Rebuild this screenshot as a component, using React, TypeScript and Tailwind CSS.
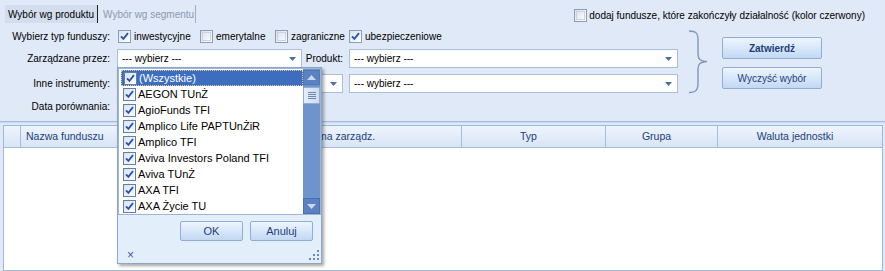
import clsx from "clsx"

const funds = [
  "(Wszystkie)",
  "AEGON TUnŻ",
  "AgioFunds TFI",
  "Amplico Life PAPTUnŻiR",
  "Amplico TFI",
  "Aviva Investors Poland TFI",
  "Aviva TUnŻ",
  "AXA TFI",
  "AXA Życie TU",
]

function Check({ on, list }: { on?: boolean; list?: boolean }) {
  return (
    <span
      className={clsx(
        "flex size-[13px] shrink-0 items-center justify-center border bg-gradient-to-br from-[#d9e1ec] to-white",
        list ? "border-[#5f7fae]" : "border-[#8b9cb5]",
      )}
    >
      {on ? (
        <svg width="9" height="9" viewBox="0 0 9 9">
          <path d="M1 4.3 L3.4 6.8 L8 1.2" stroke="#2b56a8" strokeWidth="1.9" fill="none" />
        </svg>
      ) : (
        <span className="size-[9px] border border-[#c9d3e0]" />
      )}
    </span>
  )
}

function Arrow() {
  return (
    <svg width="7" height="4" viewBox="0 0 7 4" className="ml-auto shrink-0">
      <path d="M0 0 H7 L3.5 4 Z" fill="#4d6ea8" />
    </svg>
  )
}

// the combo under the popup keeps only its arrow visible
function Combo({ w, hidden }: { w: string; hidden?: boolean }) {
  return (
    <div className={clsx("flex h-[19px] shrink-0 items-center border border-[#a9bed8] bg-white pl-[4px] pr-[5px]", w)}>
      {hidden ? null : <span>--- wybierz ---</span>}
      <Arrow />
    </div>
  )
}

function Label({ children, w = "w-[110px]" }: { children: string; w?: string }) {
  return <span className={clsx("shrink-0 whitespace-nowrap text-right", w)}>{children}</span>
}

function Btn({ children, bold, w }: { children: string; bold?: boolean; w: string }) {
  return (
    <button
      type="button"
      className={clsx(
        "flex items-center justify-center rounded-[2px] border border-[#8eaed8] bg-gradient-to-b from-[#eef5fd] via-[#d7e7f9] to-[#c2d8f3] text-[#1f3f78]",
        bold && "font-bold",
        w,
      )}
    >
      {children}
    </button>
  )
}

function Popup() {
  return (
    <div className="absolute left-[117px] top-[67px] flex h-[197px] w-[205px] flex-col border border-[#8da5c9] bg-[#e3eefb] text-[11px] shadow-[2px_2px_3px_rgba(0,0,0,0.35)]">
      <div className="flex h-[147px] border border-[#9fb5d4] bg-white">
        <div className="flex-1 pt-[1px]">
          {funds.map((f, i) => (
            <div
              key={f}
              className={clsx(
                "ml-[2px] flex h-[16px] items-center gap-[2px] whitespace-nowrap pl-[2px]",
                i === 0 ? "border border-dotted border-[#e9c982] bg-[#3d6dc0] text-white" : "text-black",
              )}
            >
              <Check on list />
              <span>{f}</span>
            </div>
          ))}
        </div>
        <div className="flex w-[17px] flex-col bg-[#6f93cb] pt-[1px]">
          <div className="flex h-[15px] items-center justify-center border border-[#5277b5] bg-[#5b83c4]">
            <svg width="9" height="5" viewBox="0 0 9 5">
              <path d="M0 5 L4.5 0 L9 5 Z" fill="#c9d8ee" />
            </svg>
          </div>
          <div className="mt-[2px] flex h-[17px] flex-col items-center justify-center gap-[1px] rounded-[1px] border border-[#93acd2] bg-gradient-to-r from-[#e4edf9] to-[#cddcf2]">
            <span className="h-px w-[8px] bg-[#6d87b0]" />
            <span className="h-px w-[8px] bg-[#6d87b0]" />
            <span className="h-px w-[8px] bg-[#6d87b0]" />
            <span className="h-px w-[8px] bg-[#6d87b0]" />
          </div>
          <div className="flex-1" />
          <div className="flex h-[16px] items-center justify-center border border-[#4a70b0] bg-[#5a82c3]">
            <svg width="9" height="5" viewBox="0 0 9 5">
              <path d="M0 0 L4.5 5 L9 0 Z" fill="#c9d8ee" />
            </svg>
          </div>
        </div>
      </div>
      <div className="mt-[6px] flex justify-end gap-[7px] pr-[8px]">
        <Btn w="h-[20px] w-[63px]">OK</Btn>
        <Btn w="h-[20px] w-[63px]">Anuluj</Btn>
      </div>
      <div className="flex flex-1 items-center justify-between pl-[9px] pr-[2px] pt-[6px]">
        <span className="text-[12px] leading-none text-[#3d5f99]">×</span>
        <svg width="10" height="10" viewBox="0 0 10 10">
          <g fill="#6f8bb5">
            <rect x="8" y="0" width="2" height="2" />
            <rect x="4" y="4" width="2" height="2" />
            <rect x="8" y="4" width="2" height="2" />
            <rect x="0" y="8" width="2" height="2" />
            <rect x="4" y="8" width="2" height="2" />
            <rect x="8" y="8" width="2" height="2" />
          </g>
        </svg>
      </div>
    </div>
  )
}

export default function App() {
  return (
    <div className="relative flex h-[271px] w-[885px] flex-col overflow-hidden bg-[#dfe9f7] font-['Liberation_Sans',sans-serif] text-[10px] text-black">
      <div className="h-[121px] shrink-0">
        <div className="flex h-[23px] items-start justify-between pl-[5px] pr-[20px] pt-[5px]">
          <div className="flex h-[18px] whitespace-nowrap">
            <div className="flex items-center border-r border-[#202020] bg-[#d2deee] pl-[3px] pr-[3px]">Wybór wg produktu</div>
            <div className="flex items-center border-r border-[#a2adbb] pl-[5px] pr-[1px] text-[#8c99ac]">Wybór wg segmentu</div>
          </div>
          <div className="mt-[3px] flex items-center gap-[2px] whitespace-nowrap">
            <Check />
            <span>dodaj fundusze, które zakończyły działalność (kolor czerwony)</span>
          </div>
        </div>

        <div className="flex">
          <div className="w-[688px] shrink-0 pt-[7px]">
            <div className="flex h-[13px] items-center">
              <Label>Wybierz typ funduszy:</Label>
              <div className="ml-[8px] flex items-center whitespace-nowrap">
                <div className="flex w-[82px] items-center gap-[3px]"><Check on /><span>inwestycyjne</span></div>
                <div className="flex w-[75px] items-center gap-[3px]"><Check /><span>emerytalne</span></div>
                <div className="flex w-[74px] items-center gap-[3px]"><Check /><span>zagraniczne</span></div>
                <div className="flex items-center gap-[3px]"><Check on /><span>ubezpieczeniowe</span></div>
              </div>
            </div>
            <div className="mt-[6px] flex items-center">
              <Label>Zarządzane przez:</Label>
              <div className="ml-[7px]"><Combo w="w-[185px]" /></div>
              <Label w="w-[41px]">Produkt:</Label>
              <div className="ml-[6px]"><Combo w="w-[329px]" /></div>
            </div>
            <div className="mt-[6px] flex items-center">
              <Label>Inne instrumenty:</Label>
              <div className="ml-[7px]"><Combo w="w-[226px]" hidden /></div>
              <div className="ml-[6px]"><Combo w="w-[329px]" /></div>
            </div>
            <div className="mt-[7px] flex h-[13px] items-center">
              <Label>Data porównania:</Label>
            </div>
          </div>
          <svg width="20" height="64" viewBox="0 0 20 64" className="mt-[7px] shrink-0">
            <path
              d="M1 1 C8 1 10 3 10 10 L10 24 C10 29 12 31 19 31.5 C12 32 10 34 10 39 L10 53 C10 60 8 62.5 1 62.5"
              stroke="#7f97ba"
              strokeWidth="1.4"
              fill="none"
            />
          </svg>
          <div className="ml-[14px] mt-[14px] flex flex-col gap-[8px]">
            <Btn bold w="h-[22px] w-[100px]">Zatwierdź</Btn>
            <Btn w="h-[22px] w-[100px]">Wyczyść wybór</Btn>
          </div>
        </div>
      </div>

      <div className="h-px shrink-0 bg-[#a3bde2]" />
      <div className="h-px shrink-0 bg-[#cbdaf0]" />
      <div className="h-[2px] shrink-0" />
      <div className="ml-[3px] mr-[2px] flex flex-1 flex-col border border-[#9fb9dc] bg-white text-[10.5px] text-[#1d3f7c]">
        <div className="flex h-[22px] shrink-0 whitespace-nowrap border-b border-[#a5bcdb] bg-gradient-to-b from-[#eef4fc] to-[#d8e5f6]">
          <div className="w-[17px] border-r border-[#a5bcdb]" />
          <div className="flex w-[209px] items-center border-r border-[#a5bcdb] pl-[5px]">Nazwa funduszu</div>
          <div className="flex w-[232px] items-center justify-center border-r border-[#a5bcdb] pr-[10px]">Firma zarządz.</div>
          <div className="flex w-[144px] items-center justify-center border-r border-[#a5bcdb] pr-[10px]">Typ</div>
          <div className="flex w-[112px] items-center justify-center border-r border-[#a5bcdb] pr-[10px]">Grupa</div>
          <div className="flex flex-1 items-center justify-center pr-[10px]">Waluta jednostki</div>
        </div>
        <div className="flex-1" />
      </div>

      <Popup />
    </div>
  )
}
